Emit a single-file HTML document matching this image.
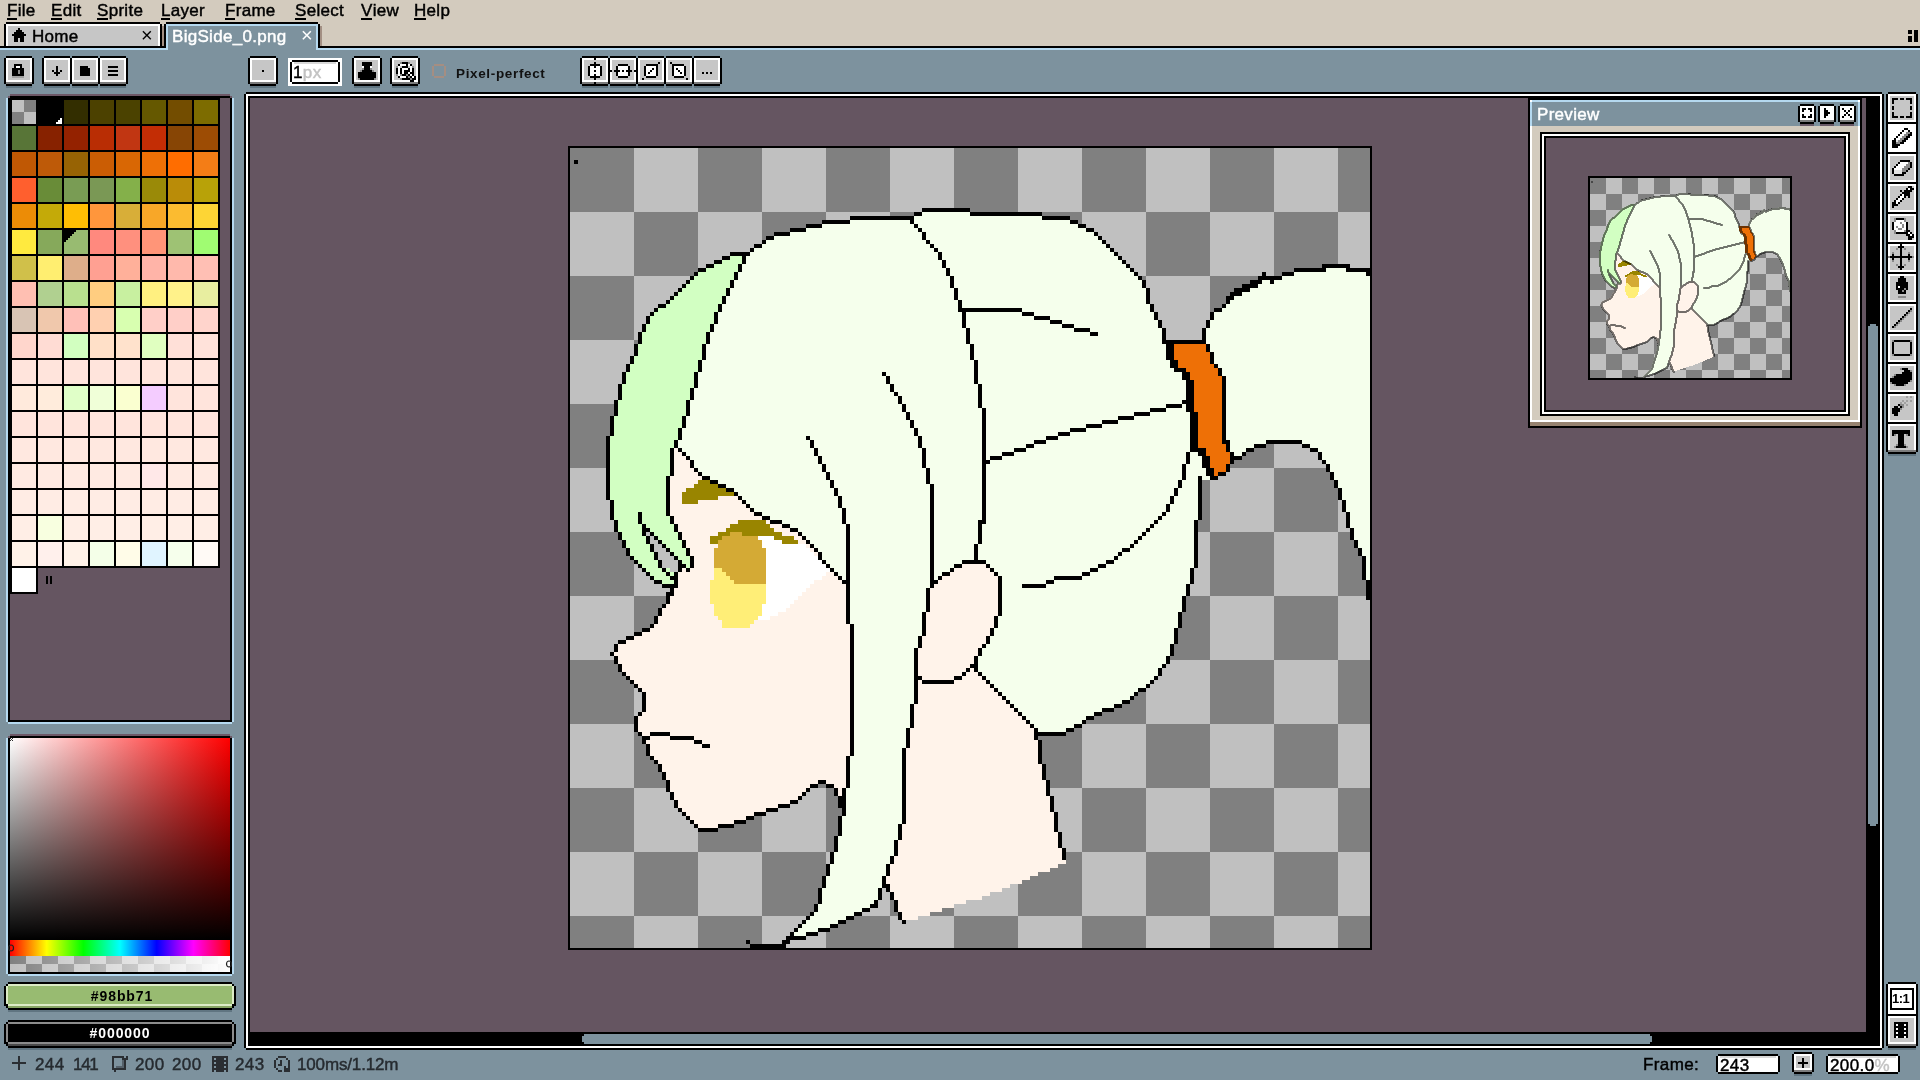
<!DOCTYPE html>
<html><head><meta charset="utf-8"><title>Aseprite - BigSide_0.png</title>
<style>
*{margin:0;padding:0;box-sizing:border-box}
html,body{width:1920px;height:1080px;overflow:hidden;background:#7d929e;font-family:"Liberation Sans",sans-serif;}
#root{position:absolute;left:0;top:0;width:1920px;height:1080px;overflow:hidden;will-change:transform}
#root i{position:absolute;display:block}
.t{position:absolute;white-space:nowrap;line-height:1;color:#000}
svg{position:absolute;display:block;overflow:visible}
u{text-decoration:none;position:relative;display:inline-block}
u::after{content:'';position:absolute;left:0;right:1px;top:16px;height:2px;background:#000}

.m{font-size:17px;top:2px;-webkit-text-stroke:.45px currentColor;letter-spacing:.3px}
.s{font-size:17px;color:#262b30;-webkit-text-stroke:.45px currentColor;letter-spacing:.4px}
</style></head>
<body><div id="root">
<i style="left:0px;top:0px;width:1920px;height:46px;background:#d3cbbe"></i><i style="left:0px;top:46px;width:1920px;height:2px;background:#000"></i><i style="left:0px;top:48px;width:1920px;height:2px;background:#b5d9f0"></i><div class="t m" style="left:7px"><u>F</u>ile</div><div class="t m" style="left:51px"><u>E</u>dit</div><div class="t m" style="left:97px"><u>S</u>prite</div><div class="t m" style="left:161px"><u>L</u>ayer</div><div class="t m" style="left:225px"><u>F</u>rame</div><div class="t m" style="left:295px"><u>S</u>elect</div><div class="t m" style="left:361px"><u>V</u>iew</div><div class="t m" style="left:414px"><u>H</u>elp</div><i style="left:6px;top:22px;width:154px;height:2px;background:#000"></i><i style="left:4px;top:24px;width:2px;height:22px;background:#000"></i><i style="left:160px;top:24px;width:2px;height:22px;background:#000"></i><i style="left:162px;top:26px;width:2px;height:20px;background:#a28f83"></i><i style="left:6px;top:24px;width:154px;height:22px;background:#fff"></i><i style="left:8px;top:26px;width:150px;height:20px;background:#c6c6c6"></i><div class="t m" style="left:32px;top:28px;top:28px">Home</div><div class="t " style="left:141px;top:25px;font-size:20px">&times;</div><i style="left:166px;top:22px;width:152px;height:2px;background:#000"></i><i style="left:164px;top:24px;width:2px;height:24px;background:#000"></i><i style="left:318px;top:24px;width:2px;height:24px;background:#000"></i><i style="left:320px;top:26px;width:2px;height:20px;background:#a28f83"></i><i style="left:166px;top:24px;width:152px;height:26px;background:#b5d9f0"></i><i style="left:168px;top:26px;width:148px;height:24px;background:#7d929e"></i><div class="t m" style="left:172px;top:28px;top:28px;color:#fff">BigSide_0.png</div><div class="t " style="left:301px;top:25px;font-size:20px;color:#fff">&times;</div><i style="left:1908px;top:30px;width:4px;height:4px;background:#000"></i><i style="left:1908px;top:36px;width:4px;height:6px;background:#000"></i><i style="left:1914px;top:30px;width:4px;height:12px;background:#000"></i>
<i style="left:6px;top:56px;width:26px;height:30px;background:#000"></i><i style="left:4px;top:58px;width:30px;height:26px;background:#000"></i><i style="left:6px;top:58px;width:26px;height:24px;background:#fff"></i><i style="left:6px;top:82px;width:26px;height:2px;background:#7c7c7c"></i><i style="left:8px;top:60px;width:22px;height:20px;background:#c6c6c6"></i><i style="left:6px;top:86px;width:26px;height:2px;background:#607581"></i><i style="left:44px;top:56px;width:26px;height:30px;background:#000"></i><i style="left:42px;top:58px;width:30px;height:26px;background:#000"></i><i style="left:44px;top:58px;width:26px;height:24px;background:#fff"></i><i style="left:44px;top:82px;width:26px;height:2px;background:#7c7c7c"></i><i style="left:46px;top:60px;width:22px;height:20px;background:#c6c6c6"></i><i style="left:44px;top:86px;width:26px;height:2px;background:#607581"></i><i style="left:72px;top:56px;width:26px;height:30px;background:#000"></i><i style="left:70px;top:58px;width:30px;height:26px;background:#000"></i><i style="left:72px;top:58px;width:26px;height:24px;background:#fff"></i><i style="left:72px;top:82px;width:26px;height:2px;background:#7c7c7c"></i><i style="left:74px;top:60px;width:22px;height:20px;background:#c6c6c6"></i><i style="left:72px;top:86px;width:26px;height:2px;background:#607581"></i><i style="left:100px;top:56px;width:26px;height:30px;background:#000"></i><i style="left:98px;top:58px;width:30px;height:26px;background:#000"></i><i style="left:100px;top:58px;width:26px;height:24px;background:#fff"></i><i style="left:100px;top:82px;width:26px;height:2px;background:#7c7c7c"></i><i style="left:102px;top:60px;width:22px;height:20px;background:#c6c6c6"></i><i style="left:100px;top:86px;width:26px;height:2px;background:#607581"></i><i style="left:250px;top:56px;width:26px;height:30px;background:#000"></i><i style="left:248px;top:58px;width:30px;height:26px;background:#000"></i><i style="left:250px;top:58px;width:26px;height:24px;background:#fff"></i><i style="left:250px;top:82px;width:26px;height:2px;background:#7c7c7c"></i><i style="left:252px;top:60px;width:22px;height:20px;background:#c6c6c6"></i><i style="left:250px;top:86px;width:26px;height:2px;background:#607581"></i><i style="left:288px;top:58px;width:54px;height:28px;background:#fff"></i><i style="left:292px;top:60px;width:46px;height:24px;background:#000"></i><i style="left:290px;top:62px;width:50px;height:20px;background:#000"></i><i style="left:292px;top:62px;width:46px;height:20px;background:#fff"></i><i style="left:294px;top:62px;width:42px;height:2px;background:#d8d8d8"></i><div class="t s" style="left:293px;top:64px;color:#000">1<span style="color:#c2c2c2">px</span></div><i style="left:354px;top:56px;width:26px;height:30px;background:#000"></i><i style="left:352px;top:58px;width:30px;height:26px;background:#000"></i><i style="left:354px;top:58px;width:26px;height:24px;background:#fff"></i><i style="left:354px;top:82px;width:26px;height:2px;background:#7c7c7c"></i><i style="left:356px;top:60px;width:22px;height:20px;background:#c6c6c6"></i><i style="left:354px;top:86px;width:26px;height:2px;background:#607581"></i><i style="left:392px;top:56px;width:26px;height:30px;background:#000"></i><i style="left:390px;top:58px;width:30px;height:26px;background:#000"></i><i style="left:392px;top:58px;width:26px;height:24px;background:#fff"></i><i style="left:392px;top:82px;width:26px;height:2px;background:#7c7c7c"></i><i style="left:394px;top:60px;width:22px;height:20px;background:#c6c6c6"></i><i style="left:392px;top:86px;width:26px;height:2px;background:#607581"></i><i style="left:434px;top:64px;width:10px;height:2px;background:#a58e82"></i><i style="left:434px;top:76px;width:10px;height:2px;background:#a58e82"></i><i style="left:432px;top:66px;width:2px;height:10px;background:#a58e82"></i><i style="left:444px;top:66px;width:2px;height:10px;background:#a58e82"></i><div class="t " style="left:456px;top:67px;font-size:13.5px;font-weight:bold;letter-spacing:.65px;color:#111">Pixel-perfect</div><i style="left:582px;top:56px;width:26px;height:30px;background:#000"></i><i style="left:580px;top:58px;width:30px;height:26px;background:#000"></i><i style="left:582px;top:58px;width:26px;height:24px;background:#fff"></i><i style="left:582px;top:82px;width:26px;height:2px;background:#7c7c7c"></i><i style="left:584px;top:60px;width:22px;height:20px;background:#c6c6c6"></i><i style="left:582px;top:86px;width:26px;height:2px;background:#607581"></i><i style="left:610px;top:56px;width:26px;height:30px;background:#000"></i><i style="left:608px;top:58px;width:30px;height:26px;background:#000"></i><i style="left:610px;top:58px;width:26px;height:24px;background:#fff"></i><i style="left:610px;top:82px;width:26px;height:2px;background:#7c7c7c"></i><i style="left:612px;top:60px;width:22px;height:20px;background:#c6c6c6"></i><i style="left:610px;top:86px;width:26px;height:2px;background:#607581"></i><i style="left:638px;top:56px;width:26px;height:30px;background:#000"></i><i style="left:636px;top:58px;width:30px;height:26px;background:#000"></i><i style="left:638px;top:58px;width:26px;height:24px;background:#fff"></i><i style="left:638px;top:82px;width:26px;height:2px;background:#7c7c7c"></i><i style="left:640px;top:60px;width:22px;height:20px;background:#c6c6c6"></i><i style="left:638px;top:86px;width:26px;height:2px;background:#607581"></i><i style="left:666px;top:56px;width:26px;height:30px;background:#000"></i><i style="left:664px;top:58px;width:30px;height:26px;background:#000"></i><i style="left:666px;top:58px;width:26px;height:24px;background:#fff"></i><i style="left:666px;top:82px;width:26px;height:2px;background:#7c7c7c"></i><i style="left:668px;top:60px;width:22px;height:20px;background:#c6c6c6"></i><i style="left:666px;top:86px;width:26px;height:2px;background:#607581"></i><i style="left:694px;top:56px;width:26px;height:30px;background:#000"></i><i style="left:692px;top:58px;width:30px;height:26px;background:#000"></i><i style="left:694px;top:58px;width:26px;height:24px;background:#fff"></i><i style="left:694px;top:82px;width:26px;height:2px;background:#7c7c7c"></i><i style="left:696px;top:60px;width:22px;height:20px;background:#c6c6c6"></i><i style="left:694px;top:86px;width:26px;height:2px;background:#607581"></i>
<i style="left:10px;top:94px;width:220px;height:2px;background:#6d5867"></i><i style="left:8px;top:96px;width:2px;height:2px;background:#6d5867"></i><i style="left:230px;top:96px;width:2px;height:2px;background:#6d5867"></i><i style="left:6px;top:98px;width:2px;height:624px;background:#b5d9f0"></i><i style="left:232px;top:98px;width:2px;height:624px;background:#b5d9f0"></i><i style="left:8px;top:722px;width:224px;height:2px;background:#b5d9f0"></i><i style="left:8px;top:98px;width:224px;height:624px;background:#000"></i><i style="left:10px;top:96px;width:220px;height:2px;background:#000"></i><i style="left:10px;top:98px;width:220px;height:622px;background:#655561"></i><i style="left:10px;top:98px;width:210px;height:470px;background:#000"></i><i style="left:10px;top:568px;width:28px;height:26px;background:#000"></i><i style="left:12px;top:100px;width:12px;height:12px;background:#c0c0c0"></i><i style="left:24px;top:100px;width:12px;height:12px;background:#808080"></i><i style="left:12px;top:112px;width:12px;height:12px;background:#808080"></i><i style="left:24px;top:112px;width:12px;height:12px;background:#c0c0c0"></i><i style="left:38px;top:100px;width:24px;height:24px;background:#000000"></i><i style="left:64px;top:100px;width:24px;height:24px;background:#332e00"></i><i style="left:90px;top:100px;width:24px;height:24px;background:#4c4100"></i><i style="left:116px;top:100px;width:24px;height:24px;background:#4b4200"></i><i style="left:142px;top:100px;width:24px;height:24px;background:#655800"></i><i style="left:168px;top:100px;width:24px;height:24px;background:#734d00"></i><i style="left:194px;top:100px;width:24px;height:24px;background:#7d6c00"></i><i style="left:12px;top:126px;width:24px;height:24px;background:#587537"></i><i style="left:38px;top:126px;width:24px;height:24px;background:#872200"></i><i style="left:64px;top:126px;width:24px;height:24px;background:#942200"></i><i style="left:90px;top:126px;width:24px;height:24px;background:#b92d04"></i><i style="left:116px;top:126px;width:24px;height:24px;background:#c13612"></i><i style="left:142px;top:126px;width:24px;height:24px;background:#c32d05"></i><i style="left:168px;top:126px;width:24px;height:24px;background:#874505"></i><i style="left:194px;top:126px;width:24px;height:24px;background:#9d4c04"></i><i style="left:12px;top:152px;width:24px;height:24px;background:#c05804"></i><i style="left:38px;top:152px;width:24px;height:24px;background:#be5a08"></i><i style="left:64px;top:152px;width:24px;height:24px;background:#976304"></i><i style="left:90px;top:152px;width:24px;height:24px;background:#cb5d04"></i><i style="left:116px;top:152px;width:24px;height:24px;background:#d96704"></i><i style="left:142px;top:152px;width:24px;height:24px;background:#ee7006"></i><i style="left:168px;top:152px;width:24px;height:24px;background:#ff6d00"></i><i style="left:194px;top:152px;width:24px;height:24px;background:#f47d16"></i><i style="left:12px;top:178px;width:24px;height:24px;background:#ff5f2e"></i><i style="left:38px;top:178px;width:24px;height:24px;background:#698c38"></i><i style="left:64px;top:178px;width:24px;height:24px;background:#799c54"></i><i style="left:90px;top:178px;width:24px;height:24px;background:#7a9855"></i><i style="left:116px;top:178px;width:24px;height:24px;background:#84b04a"></i><i style="left:142px;top:178px;width:24px;height:24px;background:#9a8a08"></i><i style="left:168px;top:178px;width:24px;height:24px;background:#ba8c08"></i><i style="left:194px;top:178px;width:24px;height:24px;background:#b8a208"></i><i style="left:12px;top:204px;width:24px;height:24px;background:#ec8c06"></i><i style="left:38px;top:204px;width:24px;height:24px;background:#c4aa08"></i><i style="left:64px;top:204px;width:24px;height:24px;background:#ffbe04"></i><i style="left:90px;top:204px;width:24px;height:24px;background:#ff963c"></i><i style="left:116px;top:204px;width:24px;height:24px;background:#d8ae38"></i><i style="left:142px;top:204px;width:24px;height:24px;background:#f8a728"></i><i style="left:168px;top:204px;width:24px;height:24px;background:#fbbb30"></i><i style="left:194px;top:204px;width:24px;height:24px;background:#fdd535"></i><i style="left:12px;top:230px;width:24px;height:24px;background:#ffea3f"></i><i style="left:38px;top:230px;width:24px;height:24px;background:#86a95b"></i><i style="left:64px;top:230px;width:24px;height:24px;background:#98bb71"></i><i style="left:90px;top:230px;width:24px;height:24px;background:#ff897e"></i><i style="left:116px;top:230px;width:24px;height:24px;background:#ff907e"></i><i style="left:142px;top:230px;width:24px;height:24px;background:#ff9578"></i><i style="left:168px;top:230px;width:24px;height:24px;background:#9ec274"></i><i style="left:194px;top:230px;width:24px;height:24px;background:#a0fc72"></i><i style="left:12px;top:256px;width:24px;height:24px;background:#d0c04a"></i><i style="left:38px;top:256px;width:24px;height:24px;background:#ffee70"></i><i style="left:64px;top:256px;width:24px;height:24px;background:#deae8a"></i><i style="left:90px;top:256px;width:24px;height:24px;background:#ffa092"></i><i style="left:116px;top:256px;width:24px;height:24px;background:#ffb09a"></i><i style="left:142px;top:256px;width:24px;height:24px;background:#ffb4a8"></i><i style="left:168px;top:256px;width:24px;height:24px;background:#ffb9ac"></i><i style="left:194px;top:256px;width:24px;height:24px;background:#ffbfb4"></i><i style="left:12px;top:282px;width:24px;height:24px;background:#ffbfb2"></i><i style="left:38px;top:282px;width:24px;height:24px;background:#b0d090"></i><i style="left:64px;top:282px;width:24px;height:24px;background:#b9e08f"></i><i style="left:90px;top:282px;width:24px;height:24px;background:#ffcd80"></i><i style="left:116px;top:282px;width:24px;height:24px;background:#c8f0a0"></i><i style="left:142px;top:282px;width:24px;height:24px;background:#fff080"></i><i style="left:168px;top:282px;width:24px;height:24px;background:#fff28a"></i><i style="left:194px;top:282px;width:24px;height:24px;background:#e8eea0"></i><i style="left:12px;top:308px;width:24px;height:24px;background:#d8c4b4"></i><i style="left:38px;top:308px;width:24px;height:24px;background:#f0c8ac"></i><i style="left:64px;top:308px;width:24px;height:24px;background:#ffc0b8"></i><i style="left:90px;top:308px;width:24px;height:24px;background:#ffd0b0"></i><i style="left:116px;top:308px;width:24px;height:24px;background:#d8ffb0"></i><i style="left:142px;top:308px;width:24px;height:24px;background:#ffcfc8"></i><i style="left:168px;top:308px;width:24px;height:24px;background:#ffcfc8"></i><i style="left:194px;top:308px;width:24px;height:24px;background:#ffd4cc"></i><i style="left:12px;top:334px;width:24px;height:24px;background:#ffd6cc"></i><i style="left:38px;top:334px;width:24px;height:24px;background:#ffdcd4"></i><i style="left:64px;top:334px;width:24px;height:24px;background:#d2ffc0"></i><i style="left:90px;top:334px;width:24px;height:24px;background:#ffe0c8"></i><i style="left:116px;top:334px;width:24px;height:24px;background:#ffe2cc"></i><i style="left:142px;top:334px;width:24px;height:24px;background:#e0ffc0"></i><i style="left:168px;top:334px;width:24px;height:24px;background:#ffe0d8"></i><i style="left:194px;top:334px;width:24px;height:24px;background:#ffe2da"></i><i style="left:12px;top:360px;width:24px;height:24px;background:#ffe4dc"></i><i style="left:38px;top:360px;width:24px;height:24px;background:#ffe4dc"></i><i style="left:64px;top:360px;width:24px;height:24px;background:#ffe4dc"></i><i style="left:90px;top:360px;width:24px;height:24px;background:#ffe4dc"></i><i style="left:116px;top:360px;width:24px;height:24px;background:#ffe4dc"></i><i style="left:142px;top:360px;width:24px;height:24px;background:#ffe4dc"></i><i style="left:168px;top:360px;width:24px;height:24px;background:#ffe4dc"></i><i style="left:194px;top:360px;width:24px;height:24px;background:#ffe4dc"></i><i style="left:12px;top:386px;width:24px;height:24px;background:#ffeadc"></i><i style="left:38px;top:386px;width:24px;height:24px;background:#ffecdc"></i><i style="left:64px;top:386px;width:24px;height:24px;background:#e0ffc8"></i><i style="left:90px;top:386px;width:24px;height:24px;background:#f0ffd8"></i><i style="left:116px;top:386px;width:24px;height:24px;background:#faffd0"></i><i style="left:142px;top:386px;width:24px;height:24px;background:#f4ccff"></i><i style="left:168px;top:386px;width:24px;height:24px;background:#ffe4dc"></i><i style="left:194px;top:386px;width:24px;height:24px;background:#ffe4dc"></i><i style="left:12px;top:412px;width:24px;height:24px;background:#ffe4dc"></i><i style="left:38px;top:412px;width:24px;height:24px;background:#ffe4dc"></i><i style="left:64px;top:412px;width:24px;height:24px;background:#ffe4dc"></i><i style="left:90px;top:412px;width:24px;height:24px;background:#ffe4dc"></i><i style="left:116px;top:412px;width:24px;height:24px;background:#ffe4dc"></i><i style="left:142px;top:412px;width:24px;height:24px;background:#ffe4dc"></i><i style="left:168px;top:412px;width:24px;height:24px;background:#ffe4dc"></i><i style="left:194px;top:412px;width:24px;height:24px;background:#ffe4dc"></i><i style="left:12px;top:438px;width:24px;height:24px;background:#ffe8e0"></i><i style="left:38px;top:438px;width:24px;height:24px;background:#ffe8e0"></i><i style="left:64px;top:438px;width:24px;height:24px;background:#ffe8e0"></i><i style="left:90px;top:438px;width:24px;height:24px;background:#ffe8e0"></i><i style="left:116px;top:438px;width:24px;height:24px;background:#ffe8e0"></i><i style="left:142px;top:438px;width:24px;height:24px;background:#ffe8e0"></i><i style="left:168px;top:438px;width:24px;height:24px;background:#ffe8e0"></i><i style="left:194px;top:438px;width:24px;height:24px;background:#ffe8e0"></i><i style="left:12px;top:464px;width:24px;height:24px;background:#ffeae2"></i><i style="left:38px;top:464px;width:24px;height:24px;background:#ffeae2"></i><i style="left:64px;top:464px;width:24px;height:24px;background:#ffeae2"></i><i style="left:90px;top:464px;width:24px;height:24px;background:#ffeae2"></i><i style="left:116px;top:464px;width:24px;height:24px;background:#ffeae2"></i><i style="left:142px;top:464px;width:24px;height:24px;background:#ffe8e8"></i><i style="left:168px;top:464px;width:24px;height:24px;background:#ffeae2"></i><i style="left:194px;top:464px;width:24px;height:24px;background:#ffeae2"></i><i style="left:12px;top:490px;width:24px;height:24px;background:#ffece4"></i><i style="left:38px;top:490px;width:24px;height:24px;background:#ffece4"></i><i style="left:64px;top:490px;width:24px;height:24px;background:#ffece4"></i><i style="left:90px;top:490px;width:24px;height:24px;background:#ffece4"></i><i style="left:116px;top:490px;width:24px;height:24px;background:#ffece4"></i><i style="left:142px;top:490px;width:24px;height:24px;background:#ffece4"></i><i style="left:168px;top:490px;width:24px;height:24px;background:#ffece4"></i><i style="left:194px;top:490px;width:24px;height:24px;background:#ffece4"></i><i style="left:12px;top:516px;width:24px;height:24px;background:#ffeee6"></i><i style="left:38px;top:516px;width:24px;height:24px;background:#f8ffe0"></i><i style="left:64px;top:516px;width:24px;height:24px;background:#ffeee6"></i><i style="left:90px;top:516px;width:24px;height:24px;background:#ffeee6"></i><i style="left:116px;top:516px;width:24px;height:24px;background:#ffeee6"></i><i style="left:142px;top:516px;width:24px;height:24px;background:#ffeee6"></i><i style="left:168px;top:516px;width:24px;height:24px;background:#ffeee6"></i><i style="left:194px;top:516px;width:24px;height:24px;background:#ffeee6"></i><i style="left:12px;top:542px;width:24px;height:24px;background:#fff2e8"></i><i style="left:38px;top:542px;width:24px;height:24px;background:#fff0ec"></i><i style="left:64px;top:542px;width:24px;height:24px;background:#fff2e8"></i><i style="left:90px;top:542px;width:24px;height:24px;background:#f4ffe8"></i><i style="left:116px;top:542px;width:24px;height:24px;background:#fffce8"></i><i style="left:142px;top:542px;width:24px;height:24px;background:#e0f4ff"></i><i style="left:168px;top:542px;width:24px;height:24px;background:#f6ffec"></i><i style="left:194px;top:542px;width:24px;height:24px;background:#fffaf6"></i><i style="left:12px;top:568px;width:24px;height:24px;background:#ffffff"></i><svg style="left:38px;top:100px" width="24" height="24" shape-rendering="crispEdges"><path d="M24 18h-2v2h-2v2h-2v2h6z" fill="#fff"/></svg><svg style="left:64px;top:230px" width="24" height="24" shape-rendering="crispEdges"><path d="M0 0h12v2h-2v2h-2v2h-2v2h-2v2h-2v2h-2z" fill="#000"/></svg><i style="left:46px;top:576px;width:2px;height:8px;background:#000"></i><i style="left:50px;top:576px;width:2px;height:8px;background:#000"></i>
<i style="left:10px;top:734px;width:220px;height:2px;background:#6d5867"></i><i style="left:8px;top:736px;width:2px;height:2px;background:#6d5867"></i><i style="left:230px;top:736px;width:2px;height:2px;background:#6d5867"></i><i style="left:6px;top:738px;width:2px;height:236px;background:#b5d9f0"></i><i style="left:232px;top:738px;width:2px;height:236px;background:#b5d9f0"></i><i style="left:8px;top:974px;width:224px;height:2px;background:#b5d9f0"></i><i style="left:8px;top:738px;width:224px;height:236px;background:#000"></i><i style="left:10px;top:736px;width:220px;height:2px;background:#000"></i><i style="left:10px;top:738px;width:220px;height:234px;background:#000"></i><i style="left:10px;top:738px;width:220px;height:202px;background:linear-gradient(to bottom,rgba(0,0,0,0),#000),linear-gradient(to right,#fff,#f00)"></i><i style="left:10px;top:940px;width:220px;height:16px;background:linear-gradient(to right,#f00,#ff0 16.67%,#0f0 33.33%,#0ff 50%,#00f 66.67%,#f0f 83.33%,#f00)"></i><i style="left:10px;top:956px;width:220px;height:16px;background:linear-gradient(to right,rgba(255,255,255,0),#fff),repeating-conic-gradient(#c0c0c0 0 25%,#808080 0 50%) 0 0/32px 16px"></i><svg style="left:6px;top:943px" width="10" height="10"><ellipse cx="5" cy="5" rx="2.5" ry="3" fill="none" stroke="#222" stroke-width="1.2"/></svg><svg style="left:224px;top:959px" width="10" height="10"><ellipse cx="5" cy="5" rx="2.5" ry="3" fill="none" stroke="#222" stroke-width="1.2"/></svg><svg style="left:8px;top:736px" width="8" height="8"><path d="M2 2l3 3M5 2l-3 3" stroke="#333" stroke-width="1" fill="none"/></svg><i style="left:8px;top:982px;width:224px;height:28px;background:#000"></i><i style="left:6px;top:984px;width:228px;height:24px;background:#000"></i><i style="left:4px;top:986px;width:232px;height:20px;background:#000"></i><i style="left:8px;top:984px;width:224px;height:22px;background:#dcebc6"></i><i style="left:6px;top:986px;width:228px;height:18px;background:#dcebc6"></i><i style="left:8px;top:1006px;width:224px;height:2px;background:#88a565"></i><i style="left:8px;top:986px;width:224px;height:18px;background:#98bb71"></i><i style="left:8px;top:1010px;width:224px;height:2px;background:#607581"></i><div class="t" style="left:6px;top:989px;width:232px;text-align:center;font-weight:bold;font-size:14px;letter-spacing:.9px;color:#000">#98bb71</div><i style="left:8px;top:1020px;width:224px;height:28px;background:#000"></i><i style="left:6px;top:1022px;width:228px;height:24px;background:#000"></i><i style="left:4px;top:1024px;width:232px;height:20px;background:#000"></i><i style="left:8px;top:1022px;width:224px;height:22px;background:#8c8c8c"></i><i style="left:6px;top:1024px;width:228px;height:18px;background:#8c8c8c"></i><i style="left:8px;top:1044px;width:224px;height:2px;background:#4a4a4a"></i><i style="left:8px;top:1024px;width:224px;height:18px;background:#000000"></i><i style="left:8px;top:1048px;width:224px;height:2px;background:#607581"></i><div class="t" style="left:4px;top:1026px;width:232px;text-align:center;font-weight:bold;font-size:14px;letter-spacing:.9px;color:#fff">#000000</div>
<i style="left:246px;top:92px;width:1636px;height:958px;background:#000"></i><i style="left:244px;top:94px;width:1640px;height:954px;background:#000"></i><i style="left:246px;top:94px;width:1636px;height:954px;background:#fff"></i><i style="left:248px;top:96px;width:1632px;height:950px;background:#000"></i><i style="left:250px;top:98px;width:1616px;height:934px;background:#655561"></i><i style="left:1868px;top:326px;width:10px;height:498px;background:#7d929e"></i><i style="left:1870px;top:324px;width:6px;height:2px;background:#7d929e"></i><i style="left:1870px;top:824px;width:6px;height:2px;background:#7d929e"></i><i style="left:584px;top:1034px;width:1066px;height:10px;background:#7d929e"></i><i style="left:582px;top:1036px;width:2px;height:6px;background:#7d929e"></i><i style="left:1650px;top:1036px;width:2px;height:6px;background:#7d929e"></i><i style="left:568px;top:146px;width:804px;height:804px;background:#000"></i><i style="left:570px;top:148px;width:800px;height:800px;background:repeating-conic-gradient(#c0c0c0 0 25%,#808080 0 50%) 0 0/128px 128px"></i>
<i style="left:1528px;top:98px;width:334px;height:330px;background:#000"></i><i style="left:1530px;top:100px;width:330px;height:326px;background:#fff"></i><i style="left:1530px;top:422px;width:330px;height:4px;background:#96826f"></i><i style="left:1532px;top:102px;width:326px;height:318px;background:#d3cbbe"></i><i style="left:1530px;top:100px;width:330px;height:26px;background:#b5d9f0"></i><i style="left:1530px;top:100px;width:2px;height:2px;background:#fff"></i><i style="left:1858px;top:100px;width:2px;height:2px;background:#fff"></i><i style="left:1532px;top:102px;width:326px;height:24px;background:#7d929e"></i><div class="t m" style="left:1537px;top:106px;top:106px;color:#fff">Preview</div><i style="left:1800px;top:104px;width:14px;height:20px;background:#000"></i><i style="left:1798px;top:106px;width:18px;height:16px;background:#000"></i><i style="left:1800px;top:106px;width:14px;height:14px;background:#fff"></i><i style="left:1800px;top:120px;width:14px;height:2px;background:#7c7c7c"></i><i style="left:1802px;top:108px;width:10px;height:10px;background:#fff"></i><i style="left:1800px;top:124px;width:14px;height:2px;background:#6a5a68"></i><i style="left:1820px;top:104px;width:14px;height:20px;background:#000"></i><i style="left:1818px;top:106px;width:18px;height:16px;background:#000"></i><i style="left:1820px;top:106px;width:14px;height:14px;background:#fff"></i><i style="left:1820px;top:120px;width:14px;height:2px;background:#7c7c7c"></i><i style="left:1822px;top:108px;width:10px;height:10px;background:#fff"></i><i style="left:1820px;top:124px;width:14px;height:2px;background:#6a5a68"></i><i style="left:1840px;top:104px;width:14px;height:20px;background:#000"></i><i style="left:1838px;top:106px;width:18px;height:16px;background:#000"></i><i style="left:1840px;top:106px;width:14px;height:14px;background:#fff"></i><i style="left:1840px;top:120px;width:14px;height:2px;background:#7c7c7c"></i><i style="left:1842px;top:108px;width:10px;height:10px;background:#fff"></i><i style="left:1840px;top:124px;width:14px;height:2px;background:#6a5a68"></i><i style="left:1540px;top:132px;width:310px;height:284px;background:#000"></i><i style="left:1542px;top:134px;width:306px;height:280px;background:#fff"></i><i style="left:1544px;top:136px;width:302px;height:276px;background:#000"></i><i style="left:1546px;top:138px;width:298px;height:272px;background:#655561"></i><i style="left:1588px;top:176px;width:204px;height:204px;background:#000"></i><i style="left:1590px;top:178px;width:200px;height:200px;background:repeating-conic-gradient(#c0c0c0 0 25%,#808080 0 50%) 0 0/32px 32px"></i>
<i style="left:1886px;top:94px;width:32px;height:358px;background:#000"></i><i style="left:1888px;top:92px;width:28px;height:362px;background:#000"></i><i style="left:1888px;top:454px;width:28px;height:2px;background:#607581"></i><i style="left:1888px;top:94px;width:28px;height:28px;background:#fff"></i><i style="left:1890px;top:96px;width:24px;height:24px;background:#c6c6c6"></i><i style="left:1888px;top:124px;width:28px;height:28px;background:#fff"></i><i style="left:1888px;top:154px;width:28px;height:28px;background:#fff"></i><i style="left:1890px;top:156px;width:24px;height:24px;background:#c6c6c6"></i><i style="left:1888px;top:184px;width:28px;height:28px;background:#fff"></i><i style="left:1890px;top:186px;width:24px;height:24px;background:#c6c6c6"></i><i style="left:1888px;top:214px;width:28px;height:28px;background:#fff"></i><i style="left:1890px;top:216px;width:24px;height:24px;background:#c6c6c6"></i><i style="left:1888px;top:244px;width:28px;height:28px;background:#fff"></i><i style="left:1890px;top:246px;width:24px;height:24px;background:#c6c6c6"></i><i style="left:1888px;top:274px;width:28px;height:28px;background:#fff"></i><i style="left:1890px;top:276px;width:24px;height:24px;background:#c6c6c6"></i><i style="left:1888px;top:304px;width:28px;height:28px;background:#fff"></i><i style="left:1890px;top:306px;width:24px;height:24px;background:#c6c6c6"></i><i style="left:1888px;top:334px;width:28px;height:28px;background:#fff"></i><i style="left:1890px;top:336px;width:24px;height:24px;background:#c6c6c6"></i><i style="left:1888px;top:364px;width:28px;height:28px;background:#fff"></i><i style="left:1890px;top:366px;width:24px;height:24px;background:#c6c6c6"></i><i style="left:1888px;top:394px;width:28px;height:28px;background:#fff"></i><i style="left:1890px;top:396px;width:24px;height:24px;background:#c6c6c6"></i><i style="left:1888px;top:424px;width:28px;height:28px;background:#fff"></i><i style="left:1890px;top:426px;width:24px;height:24px;background:#c6c6c6"></i><i style="left:1888px;top:450px;width:28px;height:2px;background:#7c7c7c"></i><i style="left:1886px;top:984px;width:32px;height:62px;background:#000"></i><i style="left:1888px;top:982px;width:28px;height:66px;background:#000"></i><i style="left:1888px;top:1048px;width:28px;height:2px;background:#607581"></i><i style="left:1888px;top:984px;width:28px;height:30px;background:#fff"></i><i style="left:1890px;top:988px;width:24px;height:22px;background:#000"></i><i style="left:1892px;top:990px;width:20px;height:18px;background:#fff"></i><i style="left:1888px;top:1016px;width:28px;height:28px;background:#fff"></i><i style="left:1890px;top:1018px;width:24px;height:24px;background:#c6c6c6"></i><i style="left:1888px;top:1044px;width:28px;height:2px;background:#7c7c7c"></i><div class="t " style="left:1892px;top:992px;font-size:13px;font-weight:bold;letter-spacing:-.5px">1:1</div>
<div class="t s" style="left:35px;top:1056px;">244</div><div class="t s" style="left:73px;top:1056px;letter-spacing:-1.3px">141</div><div class="t s" style="left:135px;top:1056px;">200</div><div class="t s" style="left:172px;top:1056px;">200</div><div class="t s" style="left:235px;top:1056px;">243</div><div class="t s" style="left:297px;top:1056px;letter-spacing:-.15px">100ms/1.12m</div><div class="t s" style="left:1643px;top:1056px;color:#000">Frame:</div><i style="left:1718px;top:1054px;width:60px;height:20px;background:#000"></i><i style="left:1716px;top:1056px;width:64px;height:16px;background:#000"></i><i style="left:1718px;top:1056px;width:60px;height:16px;background:#fff"></i><i style="left:1720px;top:1056px;width:56px;height:2px;background:#d8d8d8"></i><div class="t s" style="left:1720px;top:1057px;color:#000">243</div><i style="left:1794px;top:1052px;width:18px;height:22px;background:#000"></i><i style="left:1792px;top:1054px;width:22px;height:18px;background:#000"></i><i style="left:1794px;top:1054px;width:18px;height:16px;background:#fff"></i><i style="left:1794px;top:1070px;width:18px;height:2px;background:#7c7c7c"></i><i style="left:1796px;top:1056px;width:14px;height:12px;background:#c6c6c6"></i><i style="left:1794px;top:1074px;width:18px;height:2px;background:#607581"></i><i style="left:1828px;top:1054px;width:70px;height:20px;background:#000"></i><i style="left:1826px;top:1056px;width:74px;height:16px;background:#000"></i><i style="left:1828px;top:1056px;width:70px;height:16px;background:#fff"></i><i style="left:1830px;top:1056px;width:66px;height:2px;background:#d8d8d8"></i><div class="t s" style="left:1830px;top:1057px;color:#000">200.0<span style="color:#c2c2c2">%</span></div>
<svg style="left:570px;top:148px" width="800" height="800" viewBox="0 0 200 200" shape-rendering="crispEdges"><g id="sprf"><path fill="#f5ffec" d="M88 15h10v1h-10zM87 16h27v1h-27zM75 17h49v1h-49zM65 18h61v1h-61zM61 19h68v1h-68zM57 20h74v1h-74zM53 21h79v1h-79zM49 22h84v1h-84zM48 23h86v1h-86zM47 24h88v1h-88zM45 25h91v1h-91zM45 26h92v1h-92zM44 27h94v1h-94zM44 28h95v1h-95zM188 29h7v1h-7zM43 29h97v1h-97zM43 30h98v1h-98zM182 30h18v1h-18zM42 31h100v1h-100zM179 31h21v1h-21zM173 31h1v1h-1zM177 32h23v1h-23zM42 32h101v1h-101zM172 32h4v1h-4zM171 33h29v1h-29zM41 33h103v2h-103zM168 34h32v1h-32zM167 35h33v1h-33zM40 35h105v2h-105zM165 36h35v1h-35zM164 37h36v2h-36zM39 37h106v2h-106zM163 39h37v1h-37zM38 39h108v2h-108zM162 40h38v1h-38zM37 41h110v2h-110zM160 41h40v2h-40zM37 43h111v1h-111zM159 43h41v2h-41zM36 44h112v2h-112zM158 45h42v3h-42zM35 46h114v3h-114zM159 48h41v1h-41zM160 49h40v3h-40zM34 49h115v4h-115zM161 52h39v2h-39zM33 53h117v2h-117zM162 54h38v1h-38zM33 55h119v1h-119zM163 55h37v3h-37zM32 56h121v2h-121zM32 58h122v2h-122zM31 60h123v3h-123zM30 63h124v3h-124zM30 66h125v1h-125zM29 67h126v3h-126zM164 58h36v15h-36zM28 70h127v3h-127zM165 73h35v1h-35zM27 73h128v2h-128zM165 74h8v1h-8zM184 74h16v1h-16zM28 75h129v1h-129zM165 75h5v1h-5zM186 75h14v1h-14zM29 76h128v1h-128zM166 76h3v1h-3zM187 76h13v2h-13zM166 77h2v1h-2zM30 77h128v2h-128zM188 78h12v1h-12zM31 79h127v1h-127zM189 79h11v2h-11zM32 80h127v1h-127zM33 81h126v1h-126zM190 81h10v2h-10zM34 82h126v1h-126zM37 83h121v1h-121zM191 83h9v2h-9zM39 84h119v1h-119zM41 85h117v1h-117zM42 86h116v1h-116zM192 85h8v3h-8zM43 87h115v1h-115zM44 88h114v1h-114zM45 89h113v1h-113zM193 88h7v3h-7zM46 90h112v1h-112zM47 91h111v1h-111zM49 92h109v1h-109zM52 93h105v1h-105zM194 91h6v4h-6zM54 94h103v1h-103zM57 95h100v1h-100zM58 96h99v1h-99zM195 95h5v3h-5zM59 97h98v1h-98zM60 98h97v1h-97zM196 98h4v2h-4zM61 99h96v1h-96zM62 100h95v1h-95zM197 100h3v2h-3zM63 101h94v2h-94zM64 103h34v1h-34zM104 103h53v1h-53zM65 104h32v1h-32zM105 104h52v1h-52zM66 105h29v1h-29zM106 105h50v1h-50zM67 106h27v1h-27zM198 102h2v6h-2zM107 106h49v2h-49zM68 107h24v1h-24zM108 108h48v1h-48zM70 108h21v1h-21zM70 109h20v1h-20zM108 109h47v3h-47zM199 108h1v5h-1zM70 110h19v6h-19zM108 112h46v4h-46zM108 116h45v1h-45zM70 116h18v3h-18zM107 117h46v3h-46zM71 119h17v3h-17zM106 120h46v2h-46zM105 122h47v2h-47zM71 122h16v3h-16zM104 124h47v1h-47zM103 125h48v2h-48zM102 127h48v2h-48zM102 129h47v1h-47zM102 130h46v1h-46zM103 131h45v1h-45zM104 132h43v1h-43zM105 133h41v1h-41zM106 134h39v1h-39zM107 135h36v1h-36zM108 136h34v1h-34zM109 137h32v1h-32zM71 125h15v14h-15zM110 138h29v1h-29zM111 139h27v1h-27zM112 140h23v1h-23zM113 141h19v1h-19zM114 142h16v1h-16zM115 143h14v1h-14zM71 139h14v6h-14zM116 144h11v1h-11zM117 145h9v1h-9zM117 146h7v1h-7zM71 145h13v5h-13zM71 150h12v2h-12zM70 152h13v8h-13zM69 160h14v5h-14zM68 165h15v3h-15zM67 168h16v1h-16zM67 169h15v3h-15zM66 172h16v1h-16zM66 173h15v3h-15zM65 176h16v1h-16zM65 177h15v2h-15zM64 179h16v1h-16zM64 180h15v2h-15zM63 182h15v2h-15zM63 184h16v1h-16zM62 185h16v3h-16zM62 188h15v1h-15zM61 189h16v1h-16zM61 190h13v1h-13zM60 191h12v1h-12zM59 192h11v1h-11zM58 193h10v1h-10zM57 194h9v1h-9zM56 195h8v1h-8zM55 196h6v1h-6zM54 197h3v1h-3zM53 198h2v1h-2zM53 199h1v1h-1z"/><path fill="#fff3ea" d="M26 75h2v1h-2zM26 76h3v1h-3zM26 77h4v2h-4zM26 79h5v1h-5zM26 80h6v1h-6zM26 81h7v1h-7zM25 82h9v1h-9zM25 83h7v1h-7zM25 84h6v1h-6zM25 85h4v1h-4zM41 86h1v1h-1zM37 87h6v1h-6zM25 86h3v3h-3zM32 88h12v1h-12zM25 89h20v1h-20zM25 90h21v1h-21zM25 91h22v1h-22zM26 92h23v1h-23zM26 93h16v1h-16zM49 93h3v1h-3zM27 94h13v1h-13zM50 94h4v1h-4zM51 95h6v1h-6zM27 95h12v1h-12zM53 96h5v1h-5zM27 96h10v1h-10zM56 97h3v1h-3zM28 97h7v2h-7zM57 98h3v1h-3zM59 99h2v1h-2zM29 99h8v1h-8zM60 100h2v1h-2zM29 100h7v1h-7zM61 101h2v1h-2zM30 101h6v1h-6zM62 102h1v1h-1zM63 103h1v1h-1zM98 103h6v1h-6zM31 102h5v3h-5zM64 104h1v1h-1zM97 104h8v1h-8zM28 105h1v1h-1zM65 105h1v1h-1zM95 105h11v1h-11zM30 105h6v1h-6zM64 106h3v1h-3zM94 106h13v1h-13zM27 106h9v2h-9zM63 107h5v1h-5zM92 107h15v1h-15zM91 108h17v1h-17zM61 108h9v1h-9zM27 108h8v2h-8zM60 109h10v1h-10zM90 109h18v1h-18zM59 110h11v1h-11zM25 110h10v2h-10zM58 111h12v1h-12zM57 112h13v1h-13zM24 112h11v2h-11zM56 113h14v1h-14zM23 114h13v1h-13zM55 114h15v1h-15zM89 110h19v6h-19zM54 115h16v1h-16zM22 115h14v2h-14zM52 116h18v1h-18zM88 116h20v1h-20zM21 117h16v1h-16zM50 117h20v1h-20zM46 118h24v1h-24zM21 118h17v1h-17zM88 117h19v3h-19zM45 119h26v1h-26zM20 119h18v1h-18zM18 120h53v1h-53zM88 120h18v2h-18zM16 121h55v1h-55zM14 122h57v1h-57zM87 122h18v2h-18zM12 123h59v1h-59zM87 124h17v1h-17zM11 124h60v2h-60zM86 125h17v2h-17zM10 126h61v1h-61zM11 127h60v2h-60zM86 127h16v4h-16zM12 129h59v2h-59zM86 131h17v1h-17zM13 131h58v1h-58zM14 132h57v1h-57zM86 132h18v1h-18zM15 133h56v1h-56zM86 133h19v1h-19zM86 134h20v1h-20zM16 134h55v1h-55zM86 135h21v1h-21zM17 135h54v1h-54zM86 136h22v1h-22zM86 137h23v1h-23zM86 138h24v1h-24zM85 139h26v1h-26zM18 136h53v5h-53zM85 140h27v1h-27zM85 141h28v1h-28zM17 141h54v1h-54zM85 142h29v1h-29zM85 143h30v1h-30zM85 144h31v1h-31zM16 142h55v4h-55zM17 146h54v1h-54zM84 145h33v3h-33zM18 147h53v2h-53zM84 148h34v2h-34zM19 149h52v3h-52zM20 152h50v1h-50zM83 150h35v4h-35zM21 153h49v1h-49zM22 154h48v2h-48zM23 156h47v2h-47zM83 154h36v5h-36zM24 158h46v1h-46zM24 159h37v1h-37zM65 159h5v1h-5zM24 160h36v1h-36zM66 160h3v2h-3zM25 161h34v1h-34zM83 159h37v4h-37zM25 162h33v1h-33zM26 163h31v1h-31zM67 162h2v3h-2zM26 164h28v1h-28zM27 165h24v1h-24zM83 163h38v4h-38zM28 166h20v1h-20zM29 167h17v1h-17zM83 167h39v2h-39zM30 168h13v1h-13zM31 169h8v1h-8zM82 169h40v2h-40zM32 170h4v1h-4zM82 171h41v2h-41zM81 173h42v2h-42zM81 175h43v2h-43zM80 177h44v2h-44zM80 179h42v1h-42zM79 180h41v1h-41zM79 181h38v1h-38zM78 182h37v1h-37zM78 183h35v1h-35zM79 184h31v1h-31zM79 185h29v1h-29zM80 186h25v1h-25zM80 187h23v1h-23zM81 188h18v1h-18zM81 189h15v1h-15zM81 190h12v1h-12zM82 191h8v1h-8zM82 192h5v1h-5zM83 193h1v1h-1z"/><path fill="#d2ffc2" d="M40 26h5v1h-5zM38 27h6v1h-6zM36 28h8v1h-8zM34 29h9v1h-9zM32 30h11v1h-11zM31 31h11v1h-11zM30 32h12v1h-12zM29 33h12v1h-12zM28 34h13v1h-13zM27 35h13v1h-13zM26 36h14v1h-14zM25 37h14v1h-14zM24 38h15v1h-15zM23 39h15v1h-15zM21 40h17v1h-17zM20 41h17v1h-17zM19 42h18v2h-18zM18 44h18v2h-18zM18 46h17v1h-17zM17 47h18v2h-18zM16 49h18v3h-18zM15 52h19v1h-19zM15 53h18v1h-18zM14 54h19v2h-19zM13 56h19v3h-19zM12 59h20v1h-20zM12 60h19v3h-19zM11 63h19v4h-19zM10 67h19v3h-19zM10 70h18v3h-18zM9 73h18v2h-18zM9 75h17v7h-17zM9 82h16v6h-16zM10 88h15v4h-15zM10 92h16v1h-16zM11 93h15v1h-15zM11 94h16v2h-16zM20 96h7v1h-7zM12 96h7v2h-7zM21 97h7v1h-7zM22 98h6v1h-6zM13 98h7v2h-7zM23 99h6v1h-6zM24 100h5v1h-5zM14 100h7v2h-7zM25 101h5v1h-5zM26 102h5v1h-5zM15 102h7v1h-7zM27 103h4v1h-4zM16 103h6v1h-6zM17 104h6v1h-6zM28 104h3v1h-3zM29 105h1v1h-1zM18 105h7v1h-7zM27 105h1v1h-1zM19 106h7v1h-7zM20 107h7v1h-7zM22 108h5v1h-5zM24 109h3v1h-3z"/><path fill="#ee7006" d="M149 48h10v1h-10zM149 49h11v3h-11zM149 52h12v1h-12zM150 53h11v1h-11zM150 54h12v1h-12zM152 55h11v1h-11zM153 56h10v2h-10zM154 58h10v8h-10zM155 66h9v7h-9zM155 73h10v2h-10zM157 75h8v1h-8zM157 76h9v1h-9zM158 77h8v2h-8zM158 79h7v1h-7zM159 80h6v1h-6zM159 81h4v1h-4zM160 82h2v1h-2z"/><path fill="#ffffff" d="M47 97h4v1h-4zM48 98h5v1h-5zM48 99h11v1h-11zM49 100h11v1h-11zM49 101h12v1h-12zM49 102h13v1h-13zM49 103h14v1h-14zM49 104h15v1h-15zM49 105h16v1h-16zM49 106h15v1h-15zM49 107h14v1h-14zM49 108h12v1h-12zM49 109h11v1h-11zM49 110h10v1h-10zM49 111h9v1h-9zM49 112h8v1h-8zM49 113h7v1h-7zM48 114h7v1h-7zM48 115h6v1h-6zM48 116h4v1h-4zM47 117h3v1h-3z"/><path fill="#ffee77" d="M36 105h2v1h-2zM36 106h3v1h-3zM36 107h4v1h-4zM35 108h6v1h-6zM35 109h14v5h-14zM36 114h12v3h-12zM37 117h10v1h-10zM38 118h8v1h-8zM38 119h7v1h-7z"/><path fill="#d4aa35" d="M40 96h3v1h-3zM38 97h9v1h-9zM37 98h11v2h-11zM36 100h13v5h-13zM38 105h11v1h-11zM39 106h10v1h-10zM40 107h9v1h-9zM41 108h8v1h-8z"/><path fill="#998500" d="M32 83h5v1h-5zM31 84h8v1h-8zM29 85h12v1h-12zM28 86h13v1h-13zM28 87h9v1h-9zM28 88h4v1h-4zM42 93h7v1h-7zM40 94h10v1h-10zM39 95h12v1h-12zM37 96h3v1h-3zM43 96h10v1h-10zM35 97h3v1h-3zM51 97h5v1h-5zM35 98h2v1h-2zM53 98h4v1h-4z"/></g><path id="sprl" fill="#000" d="M1 3h1v1h-1zM88 15h12v1h-12zM86 16h2v1h-2zM100 16h18v1h-18zM118 17h7v1h-7zM70 17h16v1h-16zM85 18h1v1h-1zM63 18h7v1h-7zM125 18h2v1h-2zM59 19h4v1h-4zM86 19h1v1h-1zM127 19h2v1h-2zM87 20h1v1h-1zM129 20h2v1h-2zM55 20h4v1h-4zM51 21h4v1h-4zM131 21h1v1h-1zM88 21h1v2h-1zM49 22h2v1h-2zM132 22h1v1h-1zM133 23h1v1h-1zM48 23h1v1h-1zM89 23h1v1h-1zM46 24h2v1h-2zM90 24h1v1h-1zM134 24h1v1h-1zM135 25h1v1h-1zM45 25h1v1h-1zM91 25h1v1h-1zM40 26h5v1h-5zM136 26h1v1h-1zM92 26h1v2h-1zM38 27h2v1h-2zM137 27h1v1h-1zM43 27h1v2h-1zM36 28h2v1h-2zM138 28h1v1h-1zM93 28h1v2h-1zM139 29h1v1h-1zM188 29h7v1h-7zM34 29h2v1h-2zM42 29h1v2h-1zM140 30h1v1h-1zM181 30h8v1h-8zM194 30h6v1h-6zM32 30h2v1h-2zM94 30h1v2h-1zM199 31h1v1h-1zM173 31h1v1h-1zM141 31h1v1h-1zM31 31h1v1h-1zM178 31h3v1h-3zM41 31h1v2h-1zM30 32h1v1h-1zM172 32h6v1h-6zM142 32h1v1h-1zM29 33h1v1h-1zM170 33h3v1h-3zM175 33h1v1h-1zM95 32h1v3h-1zM40 33h1v2h-1zM143 33h1v2h-1zM28 34h1v1h-1zM168 34h4v1h-4zM166 35h4v1h-4zM27 35h1v1h-1zM39 35h1v2h-1zM26 36h1v1h-1zM165 36h3v1h-3zM96 35h1v3h-1zM164 37h2v1h-2zM25 37h1v1h-1zM144 35h1v4h-1zM38 37h1v2h-1zM24 38h1v1h-1zM164 38h1v1h-1zM97 38h1v2h-1zM22 39h2v1h-2zM163 39h1v1h-1zM145 39h1v2h-1zM37 39h1v2h-1zM97 40h16v1h-16zM161 40h2v1h-2zM21 40h1v1h-1zM20 41h1v1h-1zM113 41h3v1h-3zM146 41h1v2h-1zM160 41h1v2h-1zM116 42h4v1h-4zM36 41h1v3h-1zM19 42h1v2h-1zM120 43h3v1h-3zM98 41h1v4h-1zM147 43h1v2h-1zM159 43h1v2h-1zM123 44h3v1h-3zM18 44h1v2h-1zM35 44h1v2h-1zM126 45h4v1h-4zM130 46h2v1h-2zM148 45h1v3h-1zM158 45h1v3h-1zM99 45h1v4h-1zM17 46h1v3h-1zM34 46h1v3h-1zM148 48h11v1h-11zM159 49h1v2h-1zM16 49h1v3h-1zM33 49h1v4h-1zM149 49h2v4h-2zM100 49h1v4h-1zM160 51h1v3h-1zM15 52h1v2h-1zM150 53h2v2h-2zM161 54h1v1h-1zM32 53h1v3h-1zM14 54h1v2h-1zM151 55h3v1h-3zM162 55h1v2h-1zM78 56h1v1h-1zM153 56h2v2h-2zM101 53h1v6h-1zM13 56h1v3h-1zM79 57h1v2h-1zM31 56h1v4h-1zM80 59h1v2h-1zM81 61h1v1h-1zM154 58h2v5h-2zM12 59h1v4h-1zM30 60h1v3h-1zM82 62h1v2h-1zM153 63h3v1h-3zM102 59h1v6h-1zM149 64h4v1h-4zM154 64h2v2h-2zM83 64h1v2h-1zM145 65h4v1h-4zM11 63h1v4h-1zM29 63h1v4h-1zM141 66h4v1h-4zM84 66h1v2h-1zM137 67h4v1h-4zM133 68h4v1h-4zM28 67h1v3h-1zM85 68h1v2h-1zM129 69h4v1h-4zM125 70h4v1h-4zM10 67h1v5h-1zM86 70h1v2h-1zM122 71h3v1h-3zM163 57h1v16h-1zM27 70h1v3h-1zM119 72h3v1h-3zM59 72h1v1h-1zM116 73h3v1h-3zM174 73h9v1h-9zM163 73h2v1h-2zM155 66h2v9h-2zM87 72h1v3h-1zM26 73h1v2h-1zM60 73h1v2h-1zM114 74h2v1h-2zM171 74h3v1h-3zM183 74h2v1h-2zM164 74h1v2h-1zM185 75h2v1h-2zM169 75h2v1h-2zM155 75h4v1h-4zM27 75h1v1h-1zM111 75h3v1h-3zM61 75h1v2h-1zM28 76h1v1h-1zM168 76h1v1h-1zM165 76h1v1h-1zM108 76h3v1h-3zM157 76h2v1h-2zM103 65h1v13h-1zM187 76h1v2h-1zM29 77h1v1h-1zM165 77h3v1h-3zM105 77h3v1h-3zM154 76h1v3h-1zM62 77h1v2h-1zM103 78h2v1h-2zM188 78h1v1h-1zM165 78h1v1h-1zM88 75h1v5h-1zM158 77h2v3h-2zM30 78h1v2h-1zM189 79h1v2h-1zM164 79h1v2h-1zM63 79h1v2h-1zM31 80h1v1h-1zM25 75h1v7h-1zM159 80h2v2h-2zM162 81h2v1h-2zM32 81h1v1h-1zM153 79h1v4h-1zM64 81h1v2h-1zM190 81h1v2h-1zM33 82h2v1h-2zM160 82h2v1h-2zM89 80h1v4h-1zM35 83h2v1h-2zM65 83h1v2h-1zM152 83h1v2h-1zM191 83h1v2h-1zM37 84h2v1h-2zM39 85h2v1h-2zM66 85h1v2h-1zM151 85h1v2h-1zM41 86h1v1h-1zM9 72h1v16h-1zM192 85h1v3h-1zM42 87h1v1h-1zM150 87h1v2h-1zM43 88h1v1h-1zM67 87h1v3h-1zM44 89h1v1h-1zM193 88h1v3h-1zM149 89h1v2h-1zM45 90h1v1h-1zM24 82h1v10h-1zM148 91h1v1h-1zM46 91h2v1h-2zM103 79h1v14h-1zM157 82h1v11h-1zM10 88h1v5h-1zM147 92h1v1h-1zM48 92h2v1h-2zM68 90h1v4h-1zM17 91h1v3h-1zM25 92h1v2h-1zM50 93h3v1h-3zM146 93h1v1h-1zM102 93h2v1h-2zM194 91h1v4h-1zM18 94h1v1h-1zM145 94h1v1h-1zM53 94h2v1h-2zM11 93h1v3h-1zM26 94h1v2h-1zM55 95h2v1h-2zM144 95h1v1h-1zM18 95h2v1h-2zM57 96h1v1h-1zM18 96h1v1h-1zM20 96h1v1h-1zM143 96h1v1h-1zM195 95h1v3h-1zM12 96h1v2h-1zM27 96h1v2h-1zM58 97h1v1h-1zM142 97h1v1h-1zM21 97h1v1h-1zM102 94h1v5h-1zM19 97h1v2h-1zM22 98h1v1h-1zM141 98h1v1h-1zM59 98h1v1h-1zM28 98h1v2h-1zM13 98h1v2h-1zM196 98h1v2h-1zM23 99h1v1h-1zM140 99h1v1h-1zM60 99h1v1h-1zM20 99h1v2h-1zM61 100h1v1h-1zM24 100h1v1h-1zM138 100h2v1h-2zM29 100h1v2h-1zM14 100h1v2h-1zM197 100h1v2h-1zM25 101h1v1h-1zM137 101h1v1h-1zM101 99h1v4h-1zM21 101h1v2h-1zM62 101h1v2h-1zM26 102h1v1h-1zM136 102h1v1h-1zM15 102h1v1h-1zM27 103h1v1h-1zM134 103h2v1h-2zM98 103h6v1h-6zM63 103h1v1h-1zM16 103h1v1h-1zM156 93h1v12h-1zM30 102h1v3h-1zM22 103h1v2h-1zM27 104h2v1h-2zM17 104h1v1h-1zM64 104h1v1h-1zM132 104h2v1h-2zM104 104h1v1h-1zM96 104h2v1h-2zM95 105h1v1h-1zM23 105h1v1h-1zM18 105h1v1h-1zM29 105h1v1h-1zM65 105h1v1h-1zM27 105h1v1h-1zM130 105h2v1h-2zM105 105h1v1h-1zM106 106h1v1h-1zM66 106h1v1h-1zM26 106h1v1h-1zM93 106h2v1h-2zM24 106h1v1h-1zM19 106h1v1h-1zM128 106h2v1h-2zM90 84h1v24h-1zM69 94h1v14h-1zM198 102h1v6h-1zM121 107h7v1h-7zM20 107h1v1h-1zM25 107h2v1h-2zM92 107h1v1h-1zM67 107h1v1h-1zM155 105h1v4h-1zM26 108h1v1h-1zM21 108h2v1h-2zM68 108h2v1h-2zM90 108h2v1h-2zM119 108h2v1h-2zM23 109h4v1h-4zM90 109h1v1h-1zM113 109h6v1h-6zM25 110h1v1h-1zM154 109h1v3h-1zM24 111h2v1h-2zM199 108h1v5h-1zM24 112h1v2h-1zM23 114h1v1h-1zM89 110h1v6h-1zM153 112h1v4h-1zM107 107h1v10h-1zM22 115h1v2h-1zM69 109h1v10h-1zM21 117h1v2h-1zM152 116h1v4h-1zM106 117h1v3h-1zM20 119h1v1h-1zM18 120h2v1h-2zM88 116h1v6h-1zM105 120h1v2h-1zM16 121h2v1h-2zM14 122h2v1h-2zM151 120h1v4h-1zM104 122h1v2h-1zM12 123h2v1h-2zM87 122h1v3h-1zM103 124h1v1h-1zM11 124h1v2h-1zM150 124h1v3h-1zM102 125h1v2h-1zM10 126h1v1h-1zM11 127h1v2h-1zM101 127h1v2h-1zM149 127h1v2h-1zM148 129h1v1h-1zM100 129h2v1h-2zM12 129h1v2h-1zM101 130h1v1h-1zM99 130h1v1h-1zM86 125h1v7h-1zM147 130h1v2h-1zM102 131h1v1h-1zM13 131h1v1h-1zM98 131h1v1h-1zM103 132h1v1h-1zM14 132h1v1h-1zM146 132h1v1h-1zM96 132h2v1h-2zM86 132h2v1h-2zM145 133h1v1h-1zM15 133h1v1h-1zM88 133h8v1h-8zM104 133h1v1h-1zM144 134h1v1h-1zM105 134h1v1h-1zM16 134h1v1h-1zM106 135h1v1h-1zM17 135h1v1h-1zM142 135h2v1h-2zM107 136h1v1h-1zM141 136h1v1h-1zM140 137h1v1h-1zM108 137h1v1h-1zM86 133h1v6h-1zM138 138h2v1h-2zM109 138h1v1h-1zM136 139h2v1h-2zM110 139h1v1h-1zM18 136h1v5h-1zM133 140h3v1h-3zM111 140h1v1h-1zM17 141h1v1h-1zM112 141h1v1h-1zM131 141h2v1h-2zM113 142h1v1h-1zM129 142h2v1h-2zM128 143h1v1h-1zM114 143h1v1h-1zM85 139h1v6h-1zM126 144h2v1h-2zM115 144h1v1h-1zM16 142h1v4h-1zM124 145h2v1h-2zM116 145h1v1h-1zM20 146h5v1h-5zM17 146h1v1h-1zM116 146h8v1h-8zM25 147h6v1h-6zM18 147h2v1h-2zM116 147h1v1h-1zM18 148h1v1h-1zM31 148h2v1h-2zM84 145h1v5h-1zM33 149h2v1h-2zM70 119h1v33h-1zM19 149h1v3h-1zM20 152h1v1h-1zM117 148h1v6h-1zM21 153h1v1h-1zM22 154h1v2h-1zM118 154h1v4h-1zM23 156h1v2h-1zM62 158h2v1h-2zM69 152h1v8h-1zM60 159h2v1h-2zM64 159h2v1h-2zM24 158h1v3h-1zM59 160h1v1h-1zM119 158h1v4h-1zM68 160h1v2h-1zM66 160h1v2h-1zM58 161h1v1h-1zM25 161h1v2h-1zM57 162h1v1h-1zM55 163h2v1h-2zM67 162h2v3h-2zM26 163h1v2h-1zM52 164h3v1h-3zM120 162h1v4h-1zM27 165h1v1h-1zM49 165h3v1h-3zM68 165h1v2h-1zM28 166h1v1h-1zM46 166h3v1h-3zM29 167h1v1h-1zM44 167h2v1h-2zM83 150h1v19h-1zM30 168h1v1h-1zM41 168h3v1h-3zM31 169h1v1h-1zM37 169h4v1h-4zM121 166h1v5h-1zM32 170h5v1h-5zM67 167h1v5h-1zM82 169h1v4h-1zM122 171h1v4h-1zM66 172h1v4h-1zM81 173h1v4h-1zM123 175h1v3h-1zM65 176h1v3h-1zM80 177h1v2h-1zM79 179h1v3h-1zM64 179h1v3h-1zM78 182h1v2h-1zM63 182h1v3h-1zM78 184h2v1h-2zM79 185h1v1h-1zM77 185h1v3h-1zM80 186h1v2h-1zM62 185h1v4h-1zM76 188h1v1h-1zM75 189h2v1h-2zM81 188h1v3h-1zM61 189h1v2h-1zM73 190h2v1h-2zM60 191h1v1h-1zM71 191h2v1h-2zM82 191h1v2h-1zM69 192h2v1h-2zM59 192h1v1h-1zM58 193h1v1h-1zM83 193h1v1h-1zM67 193h2v1h-2zM57 194h1v1h-1zM65 194h2v1h-2zM62 195h3v1h-3zM56 195h1v1h-1zM55 196h1v1h-1zM59 196h3v1h-3zM54 197h5v1h-5zM44 198h1v1h-1zM53 198h2v1h-2zM45 199h9v1h-9z"/></svg>
<svg style="left:1590px;top:178px;overflow:hidden" width="200" height="200" viewBox="0 0 200 200"><use href="#sprf"/><use href="#sprl" transform="translate(.5 .5)" stroke="#000" stroke-width="1" opacity=".55"/></svg>
<svg style="left:8px;top:60px" width="22" height="18" viewBox="0 0 11 9" shape-rendering="crispEdges"><path fill="#000" d="M3 2h4v1h-4zM3 3h1v1h-1zM6 3h1v1h-1zM2 4h6v1h-6zM2 5h3v1h-3zM6 5h2v1h-2zM2 6h3v1h-3zM6 6h2v1h-2zM2 7h6v1h-6z"/><path fill="#fff" d="M4 3h2v1h-2z"/><path fill="#8a8a8a" d="M5 5h1v1h-1zM5 6h1v1h-1z"/><path fill="#a0a0a0" d="M2 8h6v1h-6z"/></svg>
<svg style="left:46px;top:60px" width="22" height="16" viewBox="0 0 11 8" shape-rendering="crispEdges"><path fill="#000" d="M5 3h1v1h-1zM5 4h1v1h-1zM3 5h1v1h-1zM5 5h1v1h-1zM7 5h1v1h-1zM4 6h3v1h-3zM5 7h1v1h-1z"/></svg>
<svg style="left:74px;top:60px" width="22" height="16" viewBox="0 0 11 8" shape-rendering="crispEdges"><path fill="#000" d="M3 3h4v1h-4zM3 4h5v1h-5zM3 5h5v1h-5zM3 6h5v1h-5zM3 7h5v1h-5z"/></svg>
<svg style="left:102px;top:60px" width="22" height="16" viewBox="0 0 11 8" shape-rendering="crispEdges"><path fill="#000" d="M3 3h5v1h-5zM3 5h5v1h-5zM3 7h5v1h-5z"/></svg>
<svg style="left:252px;top:60px" width="22" height="12" viewBox="0 0 11 6" shape-rendering="crispEdges"><path fill="#000" d="M5 5h1v1h-1z"/></svg>
<svg style="left:356px;top:60px" width="22" height="20" viewBox="0 0 11 10" shape-rendering="crispEdges"><path fill="#000" d="M3 1h5v1h-5zM3 2h5v1h-5zM4 3h3v1h-3zM4 4h3v1h-3zM3 5h5v1h-5zM1 6h9v1h-9zM1 7h9v1h-9zM1 8h9v1h-9zM2 9h7v1h-7z"/><path fill="#fff" d="M3 3h1v1h-1zM7 3h1v1h-1z"/><path fill="#8a8a8a" d="M3 4h1v1h-1zM7 4h1v1h-1zM2 5h1v1h-1zM8 5h1v1h-1zM1 9h1v1h-1zM9 9h1v1h-1z"/></svg>
<svg style="left:394px;top:60px" width="24" height="22" viewBox="0 0 12 11" shape-rendering="crispEdges"><path fill="#8a8a8a" d="M3 1h1v1h-1zM7 1h1v1h-1zM1 3h1v1h-1zM9 3h1v1h-1zM1 7h1v1h-1zM3 7h1v1h-1zM6 7h1v1h-1zM7 8h1v1h-1zM3 9h1v1h-1zM8 9h1v1h-1z"/><path fill="#000" d="M4 1h3v1h-3zM2 2h1v1h-1zM6 2h1v1h-1zM8 2h1v1h-1zM4 3h3v1h-3zM1 4h1v1h-1zM3 4h1v1h-1zM7 4h1v1h-1zM9 4h1v1h-1zM1 5h1v1h-1zM3 5h1v1h-1zM5 5h3v1h-3zM9 5h1v1h-1zM1 6h1v1h-1zM3 6h1v1h-1zM5 6h2v1h-2zM8 6h2v1h-2zM4 7h2v1h-2zM7 7h1v1h-1zM9 7h1v1h-1zM2 8h1v1h-1zM6 8h1v1h-1zM8 8h1v1h-1zM10 8h1v1h-1zM4 9h4v1h-4zM9 9h2v1h-2zM8 10h2v1h-2z"/><path fill="#fff" d="M3 2h3v1h-3zM7 2h1v1h-1zM2 3h1v1h-1zM8 3h1v1h-1zM2 4h1v1h-1zM4 4h3v1h-3zM8 4h1v1h-1zM2 5h1v1h-1zM4 5h1v1h-1zM8 5h1v1h-1zM2 6h1v1h-1zM4 6h1v1h-1zM7 6h1v1h-1zM2 7h1v1h-1zM8 7h1v1h-1zM3 8h3v1h-3zM9 8h1v1h-1z"/></svg>
<svg style="left:584px;top:56px" width="22" height="28" viewBox="0 0 11 14" shape-rendering="crispEdges"><path fill="#000" d="M5 1h1v1h-1zM5 3h1v1h-1zM3 4h5v1h-5zM2 5h1v1h-1zM5 5h1v1h-1zM8 5h1v1h-1zM2 6h1v1h-1zM8 6h1v1h-1zM2 7h1v1h-1zM5 7h1v1h-1zM8 7h1v1h-1zM2 8h1v1h-1zM8 8h1v1h-1zM2 9h1v1h-1zM5 9h1v1h-1zM8 9h1v1h-1zM3 10h5v1h-5zM5 11h1v1h-1zM5 13h1v1h-1z"/><path fill="#fff" d="M3 5h2v1h-2zM6 5h2v1h-2zM3 6h5v1h-5zM3 7h2v1h-2zM6 7h2v1h-2zM3 8h5v1h-5zM3 9h2v1h-2zM6 9h2v1h-2z"/></svg>
<svg style="left:608px;top:60px" width="28" height="18" viewBox="0 0 14 9" shape-rendering="crispEdges"><path fill="#000" d="M5 2h5v1h-5zM4 3h1v1h-1zM10 3h1v1h-1zM4 4h1v1h-1zM10 4h1v1h-1zM1 5h1v1h-1zM3 5h3v1h-3zM7 5h1v1h-1zM9 5h3v1h-3zM13 5h1v1h-1zM4 6h1v1h-1zM10 6h1v1h-1zM4 7h1v1h-1zM10 7h1v1h-1zM5 8h5v1h-5z"/><path fill="#fff" d="M5 3h5v1h-5zM5 4h5v1h-5zM6 5h1v1h-1zM8 5h1v1h-1zM5 6h5v1h-5zM5 7h5v1h-5z"/></svg>
<svg style="left:640px;top:60px" width="22" height="20" viewBox="0 0 11 10" shape-rendering="crispEdges"><path fill="#000" d="M9 1h1v1h-1zM3 2h6v1h-6zM2 3h1v1h-1zM8 3h1v1h-1zM2 4h1v1h-1zM6 4h1v1h-1zM8 4h1v1h-1zM2 5h1v1h-1zM5 5h1v1h-1zM8 5h1v1h-1zM2 6h1v1h-1zM4 6h1v1h-1zM8 6h1v1h-1zM2 7h1v1h-1zM8 7h1v1h-1zM3 8h5v1h-5zM1 9h1v1h-1z"/><path fill="#fff" d="M3 3h5v1h-5zM3 4h3v1h-3zM7 4h1v1h-1zM3 5h2v1h-2zM6 5h2v1h-2zM3 6h1v1h-1zM5 6h3v1h-3zM3 7h5v1h-5z"/></svg>
<svg style="left:668px;top:60px" width="22" height="20" viewBox="0 0 11 10" shape-rendering="crispEdges"><path fill="#000" d="M1 1h1v1h-1zM2 2h6v1h-6zM2 3h1v1h-1zM8 3h1v1h-1zM2 4h1v1h-1zM4 4h1v1h-1zM8 4h1v1h-1zM2 5h1v1h-1zM5 5h1v1h-1zM8 5h1v1h-1zM2 6h1v1h-1zM6 6h1v1h-1zM8 6h1v1h-1zM2 7h1v1h-1zM8 7h1v1h-1zM3 8h5v1h-5zM9 9h1v1h-1z"/><path fill="#fff" d="M3 3h5v1h-5zM3 4h1v1h-1zM5 4h3v1h-3zM3 5h2v1h-2zM6 5h2v1h-2zM3 6h3v1h-3zM7 6h1v1h-1zM3 7h5v1h-5z"/></svg>
<svg style="left:696px;top:60px" width="22" height="14" viewBox="0 0 11 7" shape-rendering="crispEdges"><path fill="#000" d="M3 6h1v1h-1zM5 6h1v1h-1zM7 6h1v1h-1z"/></svg>
<svg style="left:12px;top:28px" width="14" height="14" viewBox="0 0 7 7" shape-rendering="crispEdges"><path fill="#000" d="M3 0h1v1h-1zM2 1h3v1h-3zM1 2h5v1h-5zM0 3h7v1h-7zM1 4h5v1h-5zM1 5h2v1h-2zM4 5h2v1h-2zM1 6h2v1h-2zM4 6h2v1h-2z"/></svg>
<svg style="left:1890px;top:96px" width="24" height="22" viewBox="0 0 12 11" shape-rendering="crispEdges"><path fill="#000" d="M1 1h3v1h-3zM5 1h2v1h-2zM8 1h3v1h-3zM1 2h1v1h-1zM10 2h1v1h-1zM1 3h1v1h-1zM10 3h1v1h-1zM1 5h1v1h-1zM10 5h1v1h-1zM1 6h1v1h-1zM10 6h1v1h-1zM1 8h1v1h-1zM10 8h1v1h-1zM1 9h1v1h-1zM10 9h1v1h-1zM1 10h3v1h-3zM5 10h2v1h-2zM8 10h3v1h-3z"/></svg>
<svg style="left:1890px;top:126px" width="24" height="22" viewBox="0 0 12 11" shape-rendering="crispEdges"><path fill="#000" d="M7 1h2v1h-2zM6 2h1v1h-1zM9 2h1v1h-1zM5 3h1v1h-1zM10 3h1v1h-1zM4 4h1v1h-1zM9 4h2v1h-2zM3 5h1v1h-1zM8 5h2v1h-2zM2 6h1v1h-1zM7 6h2v1h-2zM1 7h2v1h-2zM6 7h2v1h-2zM1 8h2v1h-2zM5 8h2v1h-2zM1 9h4v1h-4zM1 10h3v1h-3z"/><path fill="#fff" d="M7 2h2v1h-2zM6 3h2v1h-2zM5 4h2v1h-2zM4 5h2v1h-2zM3 6h2v1h-2z"/><path fill="#8a8a8a" d="M8 3h2v1h-2zM7 4h2v1h-2zM6 5h2v1h-2zM5 6h2v1h-2zM4 7h2v1h-2zM3 8h2v1h-2z"/><path fill="#e2e2e2" d="M3 7h1v1h-1z"/></svg>
<svg style="left:1890px;top:156px" width="24" height="20" viewBox="0 0 12 10" shape-rendering="crispEdges"><path fill="#000" d="M5 2h5v1h-5zM4 3h1v1h-1zM10 3h1v1h-1zM3 4h1v1h-1zM10 4h1v1h-1zM2 5h1v1h-1zM10 5h1v1h-1zM1 6h1v1h-1zM9 6h1v1h-1zM1 7h1v1h-1zM8 7h1v1h-1zM1 8h1v1h-1zM6 8h2v1h-2zM2 9h5v1h-5z"/><path fill="#fff" d="M5 3h4v1h-4zM4 4h4v1h-4zM3 5h4v1h-4zM2 6h4v1h-4z"/><path fill="#8a8a8a" d="M9 3h1v1h-1zM8 4h2v1h-2zM7 5h3v1h-3zM6 6h3v1h-3zM6 7h2v1h-2z"/><path fill="#e2e2e2" d="M2 7h4v1h-4zM2 8h4v1h-4z"/></svg>
<svg style="left:1890px;top:186px" width="24" height="22" viewBox="0 0 12 11" shape-rendering="crispEdges"><path fill="#000" d="M9 0h2v1h-2zM8 1h1v1h-1zM10 1h2v1h-2zM5 2h1v1h-1zM7 2h4v1h-4zM6 3h4v1h-4zM5 4h1v1h-1zM7 4h3v1h-3zM4 5h1v1h-1zM7 5h1v1h-1zM9 5h1v1h-1zM3 6h1v1h-1zM6 6h1v1h-1zM2 7h1v1h-1zM5 7h1v1h-1zM1 8h2v1h-2zM4 8h1v1h-1zM1 9h3v1h-3zM1 10h1v1h-1z"/><path fill="#fff" d="M9 1h1v1h-1zM6 4h1v1h-1zM5 5h2v1h-2zM4 6h2v1h-2zM3 7h2v1h-2zM3 8h1v1h-1z"/></svg>
<svg style="left:1890px;top:216px" width="24" height="24" viewBox="0 0 12 12" shape-rendering="crispEdges"><path fill="#8a8a8a" d="M2 1h1v1h-1zM7 1h1v1h-1zM2 2h1v1h-1zM7 2h1v1h-1zM5 3h1v1h-1zM6 4h1v1h-1zM3 5h1v1h-1zM6 5h1v1h-1zM4 6h2v1h-2zM2 7h1v1h-1zM7 7h1v1h-1zM2 8h1v1h-1z"/><path fill="#000" d="M3 1h4v1h-4zM1 3h1v1h-1zM8 3h1v1h-1zM1 4h1v1h-1zM8 4h1v1h-1zM1 5h1v1h-1zM8 5h1v1h-1zM1 6h1v1h-1zM8 6h1v1h-1zM8 7h2v1h-2zM3 8h6v1h-6zM10 8h1v1h-1zM8 9h2v1h-2zM11 9h1v1h-1zM9 10h3v1h-3zM9 11h2v1h-2z"/><path fill="#fff" d="M3 2h4v1h-4zM2 3h3v1h-3zM6 3h2v1h-2zM2 4h4v1h-4zM7 4h1v1h-1zM2 5h1v1h-1zM4 5h2v1h-2zM7 5h1v1h-1zM2 6h2v1h-2zM6 6h2v1h-2zM3 7h4v1h-4zM9 8h1v1h-1zM10 9h1v1h-1z"/></svg>
<svg style="left:1888px;top:244px" width="26" height="26" viewBox="0 0 13 13" shape-rendering="crispEdges"><path fill="#000" d="M6 0h1v1h-1zM5 1h3v1h-3zM6 2h1v1h-1zM6 3h1v1h-1zM6 4h1v1h-1zM2 5h1v1h-1zM6 5h1v1h-1zM10 5h1v1h-1zM1 6h11v1h-11zM2 7h1v1h-1zM6 7h1v1h-1zM10 7h1v1h-1zM6 8h1v1h-1zM6 9h1v1h-1zM6 10h1v1h-1zM5 11h3v1h-3zM6 12h1v1h-1z"/><path fill="#8a8a8a" d="M4 2h1v1h-1zM8 2h1v1h-1zM2 4h1v1h-1zM10 4h1v1h-1zM0 6h1v1h-1zM12 6h1v1h-1zM2 8h1v1h-1zM10 8h1v1h-1zM4 10h1v1h-1zM8 10h1v1h-1z"/></svg>
<svg style="left:1890px;top:276px" width="24" height="22" viewBox="0 0 12 11" shape-rendering="crispEdges"><path fill="#000" d="M5 0h2v1h-2zM4 1h4v1h-4zM4 2h4v1h-4zM3 3h6v1h-6zM3 4h6v1h-6zM3 5h1v1h-1zM5 5h4v1h-4zM3 6h4v1h-4zM8 6h1v1h-1zM4 7h2v1h-2zM7 7h1v1h-1zM4 8h4v1h-4z"/><path fill="#fff" d="M4 5h1v1h-1z"/><path fill="#8a8a8a" d="M7 6h1v1h-1zM6 7h1v1h-1zM4 10h4v1h-4z"/></svg>
<svg style="left:1890px;top:306px" width="24" height="22" viewBox="0 0 12 11" shape-rendering="crispEdges"><path fill="#000" d="M10 1h1v1h-1zM9 2h1v1h-1zM8 3h1v1h-1zM7 4h1v1h-1zM6 5h1v1h-1zM5 6h1v1h-1zM4 7h1v1h-1zM3 8h1v1h-1zM2 9h1v1h-1zM1 10h1v1h-1z"/><path fill="#8a8a8a" d="M10 2h1v1h-1zM9 3h1v1h-1zM8 4h1v1h-1zM7 5h1v1h-1zM6 6h1v1h-1zM5 7h1v1h-1zM4 8h1v1h-1zM3 9h1v1h-1zM2 10h1v1h-1z"/></svg>
<svg style="left:1890px;top:336px" width="24" height="20" viewBox="0 0 12 10" shape-rendering="crispEdges"><path fill="#8a8a8a" d="M1 2h1v1h-1zM10 2h1v1h-1zM1 9h1v1h-1zM10 9h1v1h-1z"/><path fill="#000" d="M2 2h8v1h-8zM1 3h1v1h-1zM10 3h1v1h-1zM1 4h1v1h-1zM10 4h1v1h-1zM1 5h1v1h-1zM10 5h1v1h-1zM1 6h1v1h-1zM10 6h1v1h-1zM1 7h1v1h-1zM10 7h1v1h-1zM1 8h1v1h-1zM10 8h1v1h-1zM2 9h8v1h-8z"/></svg>
<svg style="left:1890px;top:366px" width="24" height="20" viewBox="0 0 12 10" shape-rendering="crispEdges"><path fill="#8a8a8a" d="M5 1h1v1h-1zM10 2h1v1h-1zM2 4h1v1h-1zM1 5h1v1h-1zM10 7h1v1h-1zM0 8h1v1h-1zM2 9h1v1h-1zM7 9h1v1h-1z"/><path fill="#000" d="M6 1h3v1h-3zM7 2h3v1h-3zM6 3h5v1h-5zM3 4h8v1h-8zM2 5h9v1h-9zM0 6h11v1h-11zM0 7h10v1h-10zM1 8h8v1h-8zM3 9h4v1h-4z"/></svg>
<svg style="left:1890px;top:396px" width="24" height="20" viewBox="0 0 12 10" shape-rendering="crispEdges"><path fill="#a0a0a0" d="M8 0h1v1h-1zM10 0h1v1h-1zM6 2h1v1h-1zM8 2h1v1h-1zM10 2h1v1h-1zM5 3h1v1h-1zM7 3h1v1h-1zM8 4h1v1h-1z"/><path fill="#000" d="M4 4h1v1h-1zM2 5h2v1h-2zM5 5h1v1h-1zM1 6h4v1h-4zM1 7h4v1h-4zM1 8h3v1h-3zM2 9h2v1h-2z"/><path fill="#8a8a8a" d="M5 4h2v1h-2zM6 5h1v1h-1zM5 6h1v1h-1z"/></svg>
<svg style="left:1890px;top:426px" width="24" height="22" viewBox="0 0 12 11" shape-rendering="crispEdges"><path fill="#000" d="M1 2h9v1h-9zM1 3h9v1h-9zM1 4h1v1h-1zM4 4h3v1h-3zM9 4h1v1h-1zM4 5h3v1h-3zM4 6h3v1h-3zM4 7h3v1h-3zM4 8h3v1h-3zM4 9h3v1h-3zM3 10h5v1h-5z"/><path fill="#8a8a8a" d="M2 4h1v1h-1zM8 4h1v1h-1zM3 9h1v1h-1zM7 9h1v1h-1zM2 10h1v1h-1zM8 10h1v1h-1z"/></svg>
<svg style="left:1890px;top:1018px" width="24" height="20" viewBox="0 0 12 10" shape-rendering="crispEdges"><path fill="#000" d="M2 2h7v1h-7zM2 3h1v1h-1zM4 3h3v1h-3zM8 3h1v1h-1zM2 4h7v1h-7zM2 5h1v1h-1zM4 5h3v1h-3zM8 5h1v1h-1zM2 6h7v1h-7zM2 7h1v1h-1zM4 7h3v1h-3zM8 7h1v1h-1zM2 8h7v1h-7zM2 9h1v1h-1zM4 9h3v1h-3zM8 9h1v1h-1z"/><path fill="#fff" d="M3 3h1v1h-1zM7 3h1v1h-1zM3 5h1v1h-1zM7 5h1v1h-1zM3 7h1v1h-1zM7 7h1v1h-1zM3 9h1v1h-1zM7 9h1v1h-1z"/></svg>
<svg style="left:1798px;top:1058px" width="10" height="10" viewBox="0 0 5 5" shape-rendering="crispEdges"><path fill="#000" d="M2 0h1v1h-1zM2 1h1v1h-1zM0 2h5v1h-5zM2 3h1v1h-1zM2 4h1v1h-1z"/></svg>
<svg style="left:1800px;top:104px" width="14" height="14" viewBox="0 0 7 7" shape-rendering="crispEdges"><path fill="#000" d="M1 2h2v1h-2zM4 2h2v1h-2zM1 3h1v1h-1zM5 3h1v1h-1zM1 5h1v1h-1zM5 5h1v1h-1zM1 6h2v1h-2zM4 6h2v1h-2z"/></svg>
<svg style="left:1820px;top:104px" width="14" height="14" viewBox="0 0 7 7" shape-rendering="crispEdges"><path fill="#000" d="M2 2h1v1h-1zM2 3h2v1h-2zM2 4h3v1h-3zM2 5h2v1h-2zM2 6h1v1h-1z"/></svg>
<svg style="left:1840px;top:104px" width="14" height="14" viewBox="0 0 7 7" shape-rendering="crispEdges"><path fill="#000" d="M1 2h1v1h-1zM5 2h1v1h-1zM2 3h1v1h-1zM4 3h1v1h-1zM3 4h1v1h-1zM2 5h1v1h-1zM4 5h1v1h-1zM1 6h1v1h-1zM5 6h1v1h-1z"/></svg>
<svg style="left:12px;top:1056px" width="14" height="14" viewBox="0 0 7 7" shape-rendering="crispEdges"><path fill="#2a2e33" d="M3 0h1v1h-1zM3 1h1v1h-1zM3 2h1v1h-1zM0 3h7v1h-7zM3 4h1v1h-1zM3 5h1v1h-1zM3 6h1v1h-1z"/></svg>
<svg style="left:112px;top:1056px" width="16" height="16" viewBox="0 0 8 8" shape-rendering="crispEdges"><path fill="#2a2e33" d="M0 0h6v1h-6zM7 0h1v1h-1zM0 1h1v1h-1zM5 1h3v1h-3zM0 2h1v1h-1zM6 2h1v1h-1zM0 3h1v1h-1zM6 3h1v1h-1zM0 4h1v1h-1zM6 4h1v1h-1zM0 5h1v1h-1zM6 5h1v1h-1zM0 6h7v1h-7zM1 7h1v1h-1z"/><path fill="#55616b" d="M5 2h1v1h-1zM5 3h1v1h-1zM5 4h1v1h-1zM2 5h4v1h-4z"/></svg>
<svg style="left:212px;top:1056px" width="16" height="16" viewBox="0 0 8 8" shape-rendering="crispEdges"><path fill="#2a2e33" d="M0 0h8v1h-8zM0 1h1v1h-1zM2 1h4v1h-4zM7 1h1v1h-1zM0 2h8v1h-8zM0 3h1v1h-1zM2 3h4v1h-4zM7 3h1v1h-1zM0 4h8v1h-8zM0 5h1v1h-1zM2 5h4v1h-4zM7 5h1v1h-1zM0 6h8v1h-8zM0 7h1v1h-1zM2 7h4v1h-4zM7 7h1v1h-1z"/></svg>
<svg style="left:274px;top:1056px" width="16" height="16" viewBox="0 0 8 8" shape-rendering="crispEdges"><path fill="#2a2e33" d="M2 0h4v1h-4zM1 1h1v1h-1zM6 1h1v1h-1zM0 2h1v1h-1zM3 2h1v1h-1zM7 2h1v1h-1zM0 3h1v1h-1zM3 3h1v1h-1zM7 3h1v1h-1zM0 4h1v1h-1zM2 4h2v1h-2zM7 4h1v1h-1zM0 5h1v1h-1zM5 5h1v1h-1zM7 5h1v1h-1zM1 6h1v1h-1zM5 6h3v1h-3zM2 7h2v1h-2zM5 7h3v1h-3z"/></svg>
</div></body></html>
